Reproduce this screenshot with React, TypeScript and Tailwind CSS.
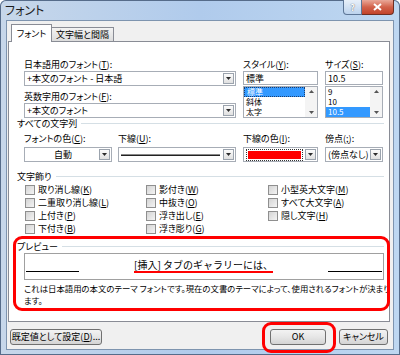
import React from 'react';

function Arrow() {
  return (
    <span className="flex h-[11px] w-[11px] shrink-0 items-center justify-center border border-[#9ba3ad] bg-gradient-to-b from-[#fcfcfc] to-[#e0e0e0]">
      <svg width="5" height="3" viewBox="0 0 5 3">
        <path d="M0 0H5L2.5 3Z" fill="#2b2b2b" />
      </svg>
    </span>
  );
}

function Combo({ className, children }: { className: string; children?: React.ReactNode }) {
  return (
    <div className={`flex h-[15px] items-center border border-[#a7adb6] bg-white pr-[1px] ${className}`}>
      <div className="flex min-w-0 flex-1 items-center pl-[2px] leading-[11px] whitespace-nowrap">{children}</div>
      <Arrow />
    </div>
  );
}

function Key({ k }: { k: string }) {
  return (
    <>
      (<span className="underline underline-offset-1">{k}</span>)
    </>
  );
}

function MiniScroll() {
  return (
    <div className="flex w-[12px] flex-col items-center justify-between bg-[#f4f4f4] py-[3px]">
      <svg width="5" height="3" viewBox="0 0 5 3">
        <path d="M0 3H5L2.5 0Z" fill="#555" />
      </svg>
      <svg width="5" height="3" viewBox="0 0 5 3">
        <path d="M0 0H5L2.5 3Z" fill="#555" />
      </svg>
    </div>
  );
}

function Check({ label, k }: { label: string; k: string }) {
  return (
    <div className="flex h-[13px] items-center gap-[3px]">
      <span className="h-[10px] w-[10px] border border-[#8f8f8f] bg-gradient-to-br from-[#d4d4d4] to-[#f4f4f4]" />
      <span className="whitespace-nowrap leading-[13px]">
        {label}
        <Key k={k} />
      </span>
    </div>
  );
}

function Group({ title }: { title: string }) {
  return (
    <div className="-ml-[7px] flex h-[11px] items-center gap-[4px]">
      <span className="whitespace-nowrap leading-[11px]">{title}</span>
      <div className="h-px flex-1 bg-[#d5dfe5]" />
    </div>
  );
}

function Button({ className, children }: { className: string; children: React.ReactNode }) {
  return (
    <div
      className={`flex h-[16px] items-center justify-center rounded-[3px] border border-[#707070] bg-gradient-to-b from-[#f3f3f3] via-[#e6e6e6] to-[#d4d4d4] leading-[12px] whitespace-nowrap ${className}`}
    >
      {children}
    </div>
  );
}

function ListRow({ className, children }: { className: string; children: React.ReactNode }) {
  return <div className={`flex h-[10px] items-center overflow-hidden pl-[2px] leading-[10px] ${className}`}>{children}</div>;
}

export default function App() {
  return (
    <div className="relative h-[355px] w-[400px] overflow-hidden rounded-t-[6px] bg-gradient-to-r from-[#c7d7ea] via-[#b0cbec] to-[#bed7f1] font-['Noto_Sans_CJK_JP','Noto_Sans',sans-serif] text-[9px] text-black shadow-[inset_0_0_0_1px_#566c8a] [font-feature-settings:'palt']">
      {/* title bar */}
      <div className="flex h-[20px] items-start justify-between">
        <span className="pl-[5px] pt-[2px] text-[12px] leading-[16px] text-[#1c1c1c]">フォント</span>
        <div className="mr-[6px] flex">
          <div className="flex h-[15px] w-[19px] items-center justify-center rounded-bl-[4px] border border-t-0 border-[#5d7697] bg-gradient-to-b from-[#e8f0f9] to-[#bcd3ee] text-[9px] leading-[9px] font-bold text-white [text-shadow:0_0_1px_#333]">
            ?
          </div>
          <div className="flex h-[15px] w-[32px] items-center justify-center rounded-br-[4px] border border-t-0 border-l-0 border-[#6e2e22] bg-gradient-to-b from-[#e9a899] via-[#d2624b] to-[#c2432a]">
            <svg width="9" height="8" viewBox="0 0 9 8">
              <path d="M1 1L8 7M8 1L1 7" stroke="#fff" strokeWidth="2" />
            </svg>
          </div>
        </div>
      </div>

      {/* client */}
      <div className="ml-[6px] flex h-[330px] w-[388px] flex-col border border-[#7e94af] bg-[#f0f0f0]">
        {/* tabs */}
        <div className="flex h-[21px] items-end pl-[4px]">
          <div className="relative z-10 flex h-[18px] w-[41px] items-center justify-center border border-b-0 border-[#898c95] bg-white leading-[12px]">
            フォント
          </div>
          <div className="flex h-[15px] w-[62px] items-center justify-center border border-l-0 border-[#898c95] bg-gradient-to-b from-[#f3f3f3] to-[#dcdcdc] leading-[12px]">
            文字幅と間隔
          </div>
        </div>

        {/* panel */}
        <div className="-mt-px ml-[1px] h-[281px] w-[382px] overflow-hidden border border-[#898c95] bg-white pt-[16px] pl-[15px] pr-[5px]">
          {/* row 1 */}
          <div className="flex h-[60px] gap-[7px]">
            <div className="flex w-[212px] flex-col">
              <div className="h-[13px] leading-[13px]">
                日本語用のフォント<Key k="T" />:
              </div>
              <Combo className="w-[212px]">+本文のフォント - 日本語</Combo>
              <div className="mt-[4px] h-[13px] leading-[13px]">
                英数字用のフォント<Key k="F" />:
              </div>
              <Combo className="w-[212px]">+本文のフォント</Combo>
            </div>
            <div className="flex w-[75px] flex-col">
              <div className="h-[13px] leading-[13px]">
                スタイル<Key k="Y" />:
              </div>
              <div className="flex h-[14px] items-center border border-[#a7adb6] bg-white pl-[2px] leading-[11px]">標準</div>
              <div className="mt-[1px] flex h-[32px] border border-[#a7adb6] bg-white">
                <div className="flex-1 text-[8px]">
                  <ListRow className="border border-dotted border-[#1c3f70] bg-[#3399ff] pl-[1px] text-white">標準</ListRow>
                  <ListRow className="">斜体</ListRow>
                  <ListRow className="">太字</ListRow>
                </div>
                <MiniScroll />
              </div>
            </div>
            <div className="flex w-[58px] flex-col">
              <div className="h-[13px] leading-[13px]">
                サイズ<Key k="S" />:
              </div>
              <div className="flex h-[14px] items-center border border-[#a7adb6] bg-white pl-[2px] leading-[11px]">10.5</div>
              <div className="mt-[1px] flex h-[32px] border border-[#a7adb6] bg-white">
                <div className="flex-1 text-[8px]">
                  <ListRow className="">9</ListRow>
                  <ListRow className="">10</ListRow>
                  <ListRow className="bg-[#3399ff] text-white">10.5</ListRow>
                </div>
                <MiniScroll />
              </div>
            </div>
          </div>

          <Group title="すべての文字列" />

          {/* row 3 */}
          <div className="mt-[3px] flex">
            <div className="flex w-[88px] flex-col">
              <div className="h-[13px] leading-[13px]">
                フォントの色<Key k="C" />:
              </div>
              <Combo className="mt-[2px] w-[88px]">
                <span className="w-full text-center">自動</span>
              </Combo>
            </div>
            <div className="ml-[6px] flex w-[118px] flex-col">
              <div className="h-[13px] leading-[13px]">
                下線<Key k="U" />:
              </div>
              <Combo className="mt-[2px] w-[118px]">
                <div className="mr-[3px] h-[2px] w-full border-t border-[#888] bg-[#222]" />
              </Combo>
            </div>
            <div className="ml-[7px] flex w-[75px] flex-col">
              <div className="h-[13px] leading-[13px]">
                下線の色<Key k="I" />:
              </div>
              <Combo className="mt-[2px] w-[75px]">
                <div className="mr-[2px] w-full border border-dotted border-[#333] p-px">
                  <div className="h-[8px] w-full bg-[#ff0000]" />
                </div>
              </Combo>
            </div>
            <div className="ml-[7px] flex w-[58px] flex-col">
              <div className="h-[13px] leading-[13px]">
                傍点<Key k=";" />:
              </div>
              <Combo className="mt-[2px] w-[58px]">(傍点なし)</Combo>
            </div>
          </div>

          <div className="mt-[9px]">
            <Group title="文字飾り" />
          </div>

          {/* checkboxes */}
          <div className="mt-[1px] ml-[1px] grid grid-cols-[121px_122px_1fr]">
            <div>
              <Check label="取り消し線" k="K" />
              <Check label="二重取り消し線" k="L" />
              <Check label="上付き" k="P" />
              <Check label="下付き" k="B" />
            </div>
            <div>
              <Check label="影付き" k="W" />
              <Check label="中抜き" k="O" />
              <Check label="浮き出し" k="E" />
              <Check label="浮き彫り" k="G" />
            </div>
            <div>
              <Check label="小型英大文字" k="M" />
              <Check label="すべて大文字" k="A" />
              <Check label="隠し文字" k="H" />
            </div>
          </div>

          <div className="mt-[6px]">
            <Group title="プレビュー" />
          </div>

          {/* preview */}
          <div className="mt-[1px] flex h-[27px] items-end border border-[#a0a0a0] bg-white pb-[6px] pl-[1px] pr-[1px]">
            <div className="mb-px h-px w-[53px] bg-black" />
            <div className="flex flex-1 justify-center">
              <span className="border-b-2 border-[#ff0000] text-[10px] leading-[12px] [font-feature-settings:normal]">
                [挿入] タブのギャラリーには、
              </span>
            </div>
            <div className="mb-px h-px w-[54px] bg-black" />
          </div>
          <div className="mt-[2px] text-[8.4px] leading-[12px] whitespace-nowrap">
            <div>これは日本語用の本文のテーマ フォントです。現在の文書のテーマによって、使用されるフォントが決まり</div>
            <div>ます。</div>
          </div>
        </div>

        {/* buttons */}
        <div className="mt-[7px] flex items-center pl-[3px] pr-[5px]">
          <Button className="w-[92px]">
            既定値として設定<Key k="D" />...
          </Button>
          <div className="flex-1" />
          <Button className="w-[56px] border-[#3c7fb1]">OK</Button>
          <Button className="ml-[13px] w-[49px]">キャンセル</Button>
        </div>
      </div>

      {/* red annotations */}
      <div className="pointer-events-none absolute left-[13px] top-[236px] h-[75px] w-[377px] rounded-[9px] border-[3px] border-[#ff0000]" />
      <div className="pointer-events-none absolute left-[262px] top-[322px] h-[31px] w-[74px] rounded-[9px] border-[3px] border-[#ff0000]" />
    </div>
  );
}
